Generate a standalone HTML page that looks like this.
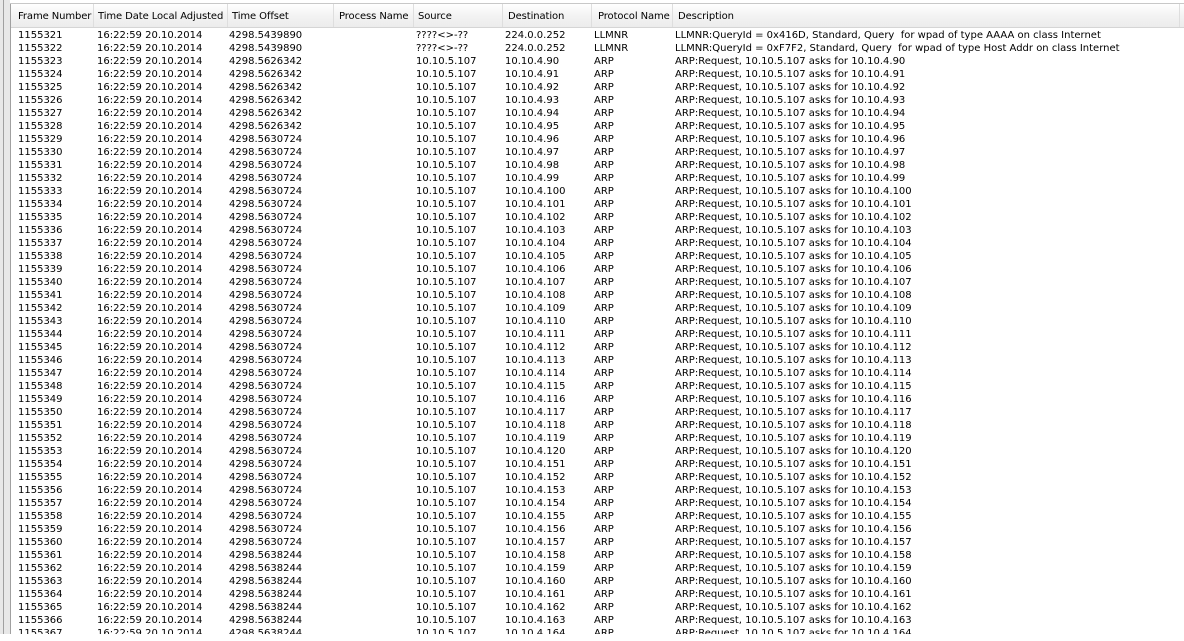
<!DOCTYPE html>
<html><head><style>
body{margin:0;width:1184px;height:638px;overflow:hidden;background:#fff;font-family:"DejaVu Sans","Liberation Sans",sans-serif;font-size:10px;color:#000;position:relative}
.lb{position:absolute;left:0;top:0;width:10px;height:634px;background:#e8e8e8;border-right:1px solid #a0a0a0}
.lb:before{content:"";position:absolute;left:3px;top:0;width:1px;height:634px;background:#a0a0a0}
.top{position:absolute;left:10px;top:0;width:1174px;height:3px;border-bottom:1px solid #c8c8c8;background:#fff}
.hd{position:absolute;left:11px;top:4px;width:1173px;height:23px;background:linear-gradient(#fff,#f3f3f3 50%,#ececec);border-bottom:1px solid #d5d5d5}
.hd span{position:absolute;top:7px;white-space:nowrap;letter-spacing:-0.1px}
.hd i{position:absolute;top:0;width:1px;height:23px;background:#dedede}
#rows{position:absolute;left:0;top:1px;width:1184px;height:640px}
.r{position:absolute;left:0;height:13px;width:1184px}
.r span{position:absolute;top:0;white-space:nowrap;line-height:13px;letter-spacing:0}
.a{left:18px}.b{left:97px}.c{left:229px}.d{left:416px}.e{left:505px}.f{left:594px}.g{left:675px}
</style></head><body>
<div class="lb"></div><div class="top"></div>
<div class="hd">
<span style="left:7px">Frame Number</span><i style="left:82px"></i>
<span style="left:87px">Time Date Local Adjusted</span><i style="left:216px"></i>
<span style="left:221px">Time Offset</span><i style="left:322px"></i>
<span style="left:328px">Process Name</span><i style="left:402px"></i>
<span style="left:407px">Source</span><i style="left:491px"></i>
<span style="left:497px">Destination</span><i style="left:580px"></i>
<span style="left:587px">Protocol Name</span><i style="left:661px"></i>
<span style="left:667px">Description</span><i style="left:1168px"></i>
</div>
<div id="rows">
<div class="r" style="top:28px"><span class="a">1155321</span><span class="b">16:22:59 20.10.2014</span><span class="c">4298.5439890</span><span class="d">????&lt;&gt;-??</span><span class="e">224.0.0.252</span><span class="f">LLMNR</span><span class="g">LLMNR:QueryId = 0x416D, Standard, Query&nbsp; for wpad of type AAAA on class Internet</span></div>
<div class="r" style="top:41px"><span class="a">1155322</span><span class="b">16:22:59 20.10.2014</span><span class="c">4298.5439890</span><span class="d">????&lt;&gt;-??</span><span class="e">224.0.0.252</span><span class="f">LLMNR</span><span class="g">LLMNR:QueryId = 0xF7F2, Standard, Query&nbsp; for wpad of type Host Addr on class Internet</span></div>
<div class="r" style="top:54px"><span class="a">1155323</span><span class="b">16:22:59 20.10.2014</span><span class="c">4298.5626342</span><span class="d">10.10.5.107</span><span class="e">10.10.4.90</span><span class="f">ARP</span><span class="g">ARP:Request, 10.10.5.107 asks for 10.10.4.90</span></div>
<div class="r" style="top:67px"><span class="a">1155324</span><span class="b">16:22:59 20.10.2014</span><span class="c">4298.5626342</span><span class="d">10.10.5.107</span><span class="e">10.10.4.91</span><span class="f">ARP</span><span class="g">ARP:Request, 10.10.5.107 asks for 10.10.4.91</span></div>
<div class="r" style="top:80px"><span class="a">1155325</span><span class="b">16:22:59 20.10.2014</span><span class="c">4298.5626342</span><span class="d">10.10.5.107</span><span class="e">10.10.4.92</span><span class="f">ARP</span><span class="g">ARP:Request, 10.10.5.107 asks for 10.10.4.92</span></div>
<div class="r" style="top:93px"><span class="a">1155326</span><span class="b">16:22:59 20.10.2014</span><span class="c">4298.5626342</span><span class="d">10.10.5.107</span><span class="e">10.10.4.93</span><span class="f">ARP</span><span class="g">ARP:Request, 10.10.5.107 asks for 10.10.4.93</span></div>
<div class="r" style="top:106px"><span class="a">1155327</span><span class="b">16:22:59 20.10.2014</span><span class="c">4298.5626342</span><span class="d">10.10.5.107</span><span class="e">10.10.4.94</span><span class="f">ARP</span><span class="g">ARP:Request, 10.10.5.107 asks for 10.10.4.94</span></div>
<div class="r" style="top:119px"><span class="a">1155328</span><span class="b">16:22:59 20.10.2014</span><span class="c">4298.5626342</span><span class="d">10.10.5.107</span><span class="e">10.10.4.95</span><span class="f">ARP</span><span class="g">ARP:Request, 10.10.5.107 asks for 10.10.4.95</span></div>
<div class="r" style="top:132px"><span class="a">1155329</span><span class="b">16:22:59 20.10.2014</span><span class="c">4298.5630724</span><span class="d">10.10.5.107</span><span class="e">10.10.4.96</span><span class="f">ARP</span><span class="g">ARP:Request, 10.10.5.107 asks for 10.10.4.96</span></div>
<div class="r" style="top:145px"><span class="a">1155330</span><span class="b">16:22:59 20.10.2014</span><span class="c">4298.5630724</span><span class="d">10.10.5.107</span><span class="e">10.10.4.97</span><span class="f">ARP</span><span class="g">ARP:Request, 10.10.5.107 asks for 10.10.4.97</span></div>
<div class="r" style="top:158px"><span class="a">1155331</span><span class="b">16:22:59 20.10.2014</span><span class="c">4298.5630724</span><span class="d">10.10.5.107</span><span class="e">10.10.4.98</span><span class="f">ARP</span><span class="g">ARP:Request, 10.10.5.107 asks for 10.10.4.98</span></div>
<div class="r" style="top:171px"><span class="a">1155332</span><span class="b">16:22:59 20.10.2014</span><span class="c">4298.5630724</span><span class="d">10.10.5.107</span><span class="e">10.10.4.99</span><span class="f">ARP</span><span class="g">ARP:Request, 10.10.5.107 asks for 10.10.4.99</span></div>
<div class="r" style="top:184px"><span class="a">1155333</span><span class="b">16:22:59 20.10.2014</span><span class="c">4298.5630724</span><span class="d">10.10.5.107</span><span class="e">10.10.4.100</span><span class="f">ARP</span><span class="g">ARP:Request, 10.10.5.107 asks for 10.10.4.100</span></div>
<div class="r" style="top:197px"><span class="a">1155334</span><span class="b">16:22:59 20.10.2014</span><span class="c">4298.5630724</span><span class="d">10.10.5.107</span><span class="e">10.10.4.101</span><span class="f">ARP</span><span class="g">ARP:Request, 10.10.5.107 asks for 10.10.4.101</span></div>
<div class="r" style="top:210px"><span class="a">1155335</span><span class="b">16:22:59 20.10.2014</span><span class="c">4298.5630724</span><span class="d">10.10.5.107</span><span class="e">10.10.4.102</span><span class="f">ARP</span><span class="g">ARP:Request, 10.10.5.107 asks for 10.10.4.102</span></div>
<div class="r" style="top:223px"><span class="a">1155336</span><span class="b">16:22:59 20.10.2014</span><span class="c">4298.5630724</span><span class="d">10.10.5.107</span><span class="e">10.10.4.103</span><span class="f">ARP</span><span class="g">ARP:Request, 10.10.5.107 asks for 10.10.4.103</span></div>
<div class="r" style="top:236px"><span class="a">1155337</span><span class="b">16:22:59 20.10.2014</span><span class="c">4298.5630724</span><span class="d">10.10.5.107</span><span class="e">10.10.4.104</span><span class="f">ARP</span><span class="g">ARP:Request, 10.10.5.107 asks for 10.10.4.104</span></div>
<div class="r" style="top:249px"><span class="a">1155338</span><span class="b">16:22:59 20.10.2014</span><span class="c">4298.5630724</span><span class="d">10.10.5.107</span><span class="e">10.10.4.105</span><span class="f">ARP</span><span class="g">ARP:Request, 10.10.5.107 asks for 10.10.4.105</span></div>
<div class="r" style="top:262px"><span class="a">1155339</span><span class="b">16:22:59 20.10.2014</span><span class="c">4298.5630724</span><span class="d">10.10.5.107</span><span class="e">10.10.4.106</span><span class="f">ARP</span><span class="g">ARP:Request, 10.10.5.107 asks for 10.10.4.106</span></div>
<div class="r" style="top:275px"><span class="a">1155340</span><span class="b">16:22:59 20.10.2014</span><span class="c">4298.5630724</span><span class="d">10.10.5.107</span><span class="e">10.10.4.107</span><span class="f">ARP</span><span class="g">ARP:Request, 10.10.5.107 asks for 10.10.4.107</span></div>
<div class="r" style="top:288px"><span class="a">1155341</span><span class="b">16:22:59 20.10.2014</span><span class="c">4298.5630724</span><span class="d">10.10.5.107</span><span class="e">10.10.4.108</span><span class="f">ARP</span><span class="g">ARP:Request, 10.10.5.107 asks for 10.10.4.108</span></div>
<div class="r" style="top:301px"><span class="a">1155342</span><span class="b">16:22:59 20.10.2014</span><span class="c">4298.5630724</span><span class="d">10.10.5.107</span><span class="e">10.10.4.109</span><span class="f">ARP</span><span class="g">ARP:Request, 10.10.5.107 asks for 10.10.4.109</span></div>
<div class="r" style="top:314px"><span class="a">1155343</span><span class="b">16:22:59 20.10.2014</span><span class="c">4298.5630724</span><span class="d">10.10.5.107</span><span class="e">10.10.4.110</span><span class="f">ARP</span><span class="g">ARP:Request, 10.10.5.107 asks for 10.10.4.110</span></div>
<div class="r" style="top:327px"><span class="a">1155344</span><span class="b">16:22:59 20.10.2014</span><span class="c">4298.5630724</span><span class="d">10.10.5.107</span><span class="e">10.10.4.111</span><span class="f">ARP</span><span class="g">ARP:Request, 10.10.5.107 asks for 10.10.4.111</span></div>
<div class="r" style="top:340px"><span class="a">1155345</span><span class="b">16:22:59 20.10.2014</span><span class="c">4298.5630724</span><span class="d">10.10.5.107</span><span class="e">10.10.4.112</span><span class="f">ARP</span><span class="g">ARP:Request, 10.10.5.107 asks for 10.10.4.112</span></div>
<div class="r" style="top:353px"><span class="a">1155346</span><span class="b">16:22:59 20.10.2014</span><span class="c">4298.5630724</span><span class="d">10.10.5.107</span><span class="e">10.10.4.113</span><span class="f">ARP</span><span class="g">ARP:Request, 10.10.5.107 asks for 10.10.4.113</span></div>
<div class="r" style="top:366px"><span class="a">1155347</span><span class="b">16:22:59 20.10.2014</span><span class="c">4298.5630724</span><span class="d">10.10.5.107</span><span class="e">10.10.4.114</span><span class="f">ARP</span><span class="g">ARP:Request, 10.10.5.107 asks for 10.10.4.114</span></div>
<div class="r" style="top:379px"><span class="a">1155348</span><span class="b">16:22:59 20.10.2014</span><span class="c">4298.5630724</span><span class="d">10.10.5.107</span><span class="e">10.10.4.115</span><span class="f">ARP</span><span class="g">ARP:Request, 10.10.5.107 asks for 10.10.4.115</span></div>
<div class="r" style="top:392px"><span class="a">1155349</span><span class="b">16:22:59 20.10.2014</span><span class="c">4298.5630724</span><span class="d">10.10.5.107</span><span class="e">10.10.4.116</span><span class="f">ARP</span><span class="g">ARP:Request, 10.10.5.107 asks for 10.10.4.116</span></div>
<div class="r" style="top:405px"><span class="a">1155350</span><span class="b">16:22:59 20.10.2014</span><span class="c">4298.5630724</span><span class="d">10.10.5.107</span><span class="e">10.10.4.117</span><span class="f">ARP</span><span class="g">ARP:Request, 10.10.5.107 asks for 10.10.4.117</span></div>
<div class="r" style="top:418px"><span class="a">1155351</span><span class="b">16:22:59 20.10.2014</span><span class="c">4298.5630724</span><span class="d">10.10.5.107</span><span class="e">10.10.4.118</span><span class="f">ARP</span><span class="g">ARP:Request, 10.10.5.107 asks for 10.10.4.118</span></div>
<div class="r" style="top:431px"><span class="a">1155352</span><span class="b">16:22:59 20.10.2014</span><span class="c">4298.5630724</span><span class="d">10.10.5.107</span><span class="e">10.10.4.119</span><span class="f">ARP</span><span class="g">ARP:Request, 10.10.5.107 asks for 10.10.4.119</span></div>
<div class="r" style="top:444px"><span class="a">1155353</span><span class="b">16:22:59 20.10.2014</span><span class="c">4298.5630724</span><span class="d">10.10.5.107</span><span class="e">10.10.4.120</span><span class="f">ARP</span><span class="g">ARP:Request, 10.10.5.107 asks for 10.10.4.120</span></div>
<div class="r" style="top:457px"><span class="a">1155354</span><span class="b">16:22:59 20.10.2014</span><span class="c">4298.5630724</span><span class="d">10.10.5.107</span><span class="e">10.10.4.151</span><span class="f">ARP</span><span class="g">ARP:Request, 10.10.5.107 asks for 10.10.4.151</span></div>
<div class="r" style="top:470px"><span class="a">1155355</span><span class="b">16:22:59 20.10.2014</span><span class="c">4298.5630724</span><span class="d">10.10.5.107</span><span class="e">10.10.4.152</span><span class="f">ARP</span><span class="g">ARP:Request, 10.10.5.107 asks for 10.10.4.152</span></div>
<div class="r" style="top:483px"><span class="a">1155356</span><span class="b">16:22:59 20.10.2014</span><span class="c">4298.5630724</span><span class="d">10.10.5.107</span><span class="e">10.10.4.153</span><span class="f">ARP</span><span class="g">ARP:Request, 10.10.5.107 asks for 10.10.4.153</span></div>
<div class="r" style="top:496px"><span class="a">1155357</span><span class="b">16:22:59 20.10.2014</span><span class="c">4298.5630724</span><span class="d">10.10.5.107</span><span class="e">10.10.4.154</span><span class="f">ARP</span><span class="g">ARP:Request, 10.10.5.107 asks for 10.10.4.154</span></div>
<div class="r" style="top:509px"><span class="a">1155358</span><span class="b">16:22:59 20.10.2014</span><span class="c">4298.5630724</span><span class="d">10.10.5.107</span><span class="e">10.10.4.155</span><span class="f">ARP</span><span class="g">ARP:Request, 10.10.5.107 asks for 10.10.4.155</span></div>
<div class="r" style="top:522px"><span class="a">1155359</span><span class="b">16:22:59 20.10.2014</span><span class="c">4298.5630724</span><span class="d">10.10.5.107</span><span class="e">10.10.4.156</span><span class="f">ARP</span><span class="g">ARP:Request, 10.10.5.107 asks for 10.10.4.156</span></div>
<div class="r" style="top:535px"><span class="a">1155360</span><span class="b">16:22:59 20.10.2014</span><span class="c">4298.5630724</span><span class="d">10.10.5.107</span><span class="e">10.10.4.157</span><span class="f">ARP</span><span class="g">ARP:Request, 10.10.5.107 asks for 10.10.4.157</span></div>
<div class="r" style="top:548px"><span class="a">1155361</span><span class="b">16:22:59 20.10.2014</span><span class="c">4298.5638244</span><span class="d">10.10.5.107</span><span class="e">10.10.4.158</span><span class="f">ARP</span><span class="g">ARP:Request, 10.10.5.107 asks for 10.10.4.158</span></div>
<div class="r" style="top:561px"><span class="a">1155362</span><span class="b">16:22:59 20.10.2014</span><span class="c">4298.5638244</span><span class="d">10.10.5.107</span><span class="e">10.10.4.159</span><span class="f">ARP</span><span class="g">ARP:Request, 10.10.5.107 asks for 10.10.4.159</span></div>
<div class="r" style="top:574px"><span class="a">1155363</span><span class="b">16:22:59 20.10.2014</span><span class="c">4298.5638244</span><span class="d">10.10.5.107</span><span class="e">10.10.4.160</span><span class="f">ARP</span><span class="g">ARP:Request, 10.10.5.107 asks for 10.10.4.160</span></div>
<div class="r" style="top:587px"><span class="a">1155364</span><span class="b">16:22:59 20.10.2014</span><span class="c">4298.5638244</span><span class="d">10.10.5.107</span><span class="e">10.10.4.161</span><span class="f">ARP</span><span class="g">ARP:Request, 10.10.5.107 asks for 10.10.4.161</span></div>
<div class="r" style="top:600px"><span class="a">1155365</span><span class="b">16:22:59 20.10.2014</span><span class="c">4298.5638244</span><span class="d">10.10.5.107</span><span class="e">10.10.4.162</span><span class="f">ARP</span><span class="g">ARP:Request, 10.10.5.107 asks for 10.10.4.162</span></div>
<div class="r" style="top:613px"><span class="a">1155366</span><span class="b">16:22:59 20.10.2014</span><span class="c">4298.5638244</span><span class="d">10.10.5.107</span><span class="e">10.10.4.163</span><span class="f">ARP</span><span class="g">ARP:Request, 10.10.5.107 asks for 10.10.4.163</span></div>
<div class="r" style="top:626px"><span class="a">1155367</span><span class="b">16:22:59 20.10.2014</span><span class="c">4298.5638244</span><span class="d">10.10.5.107</span><span class="e">10.10.4.164</span><span class="f">ARP</span><span class="g">ARP:Request, 10.10.5.107 asks for 10.10.4.164</span></div>
</div>
<div style="position:absolute;left:0;top:634px;width:1184px;height:4px;background:#fff"></div>
</body></html>
